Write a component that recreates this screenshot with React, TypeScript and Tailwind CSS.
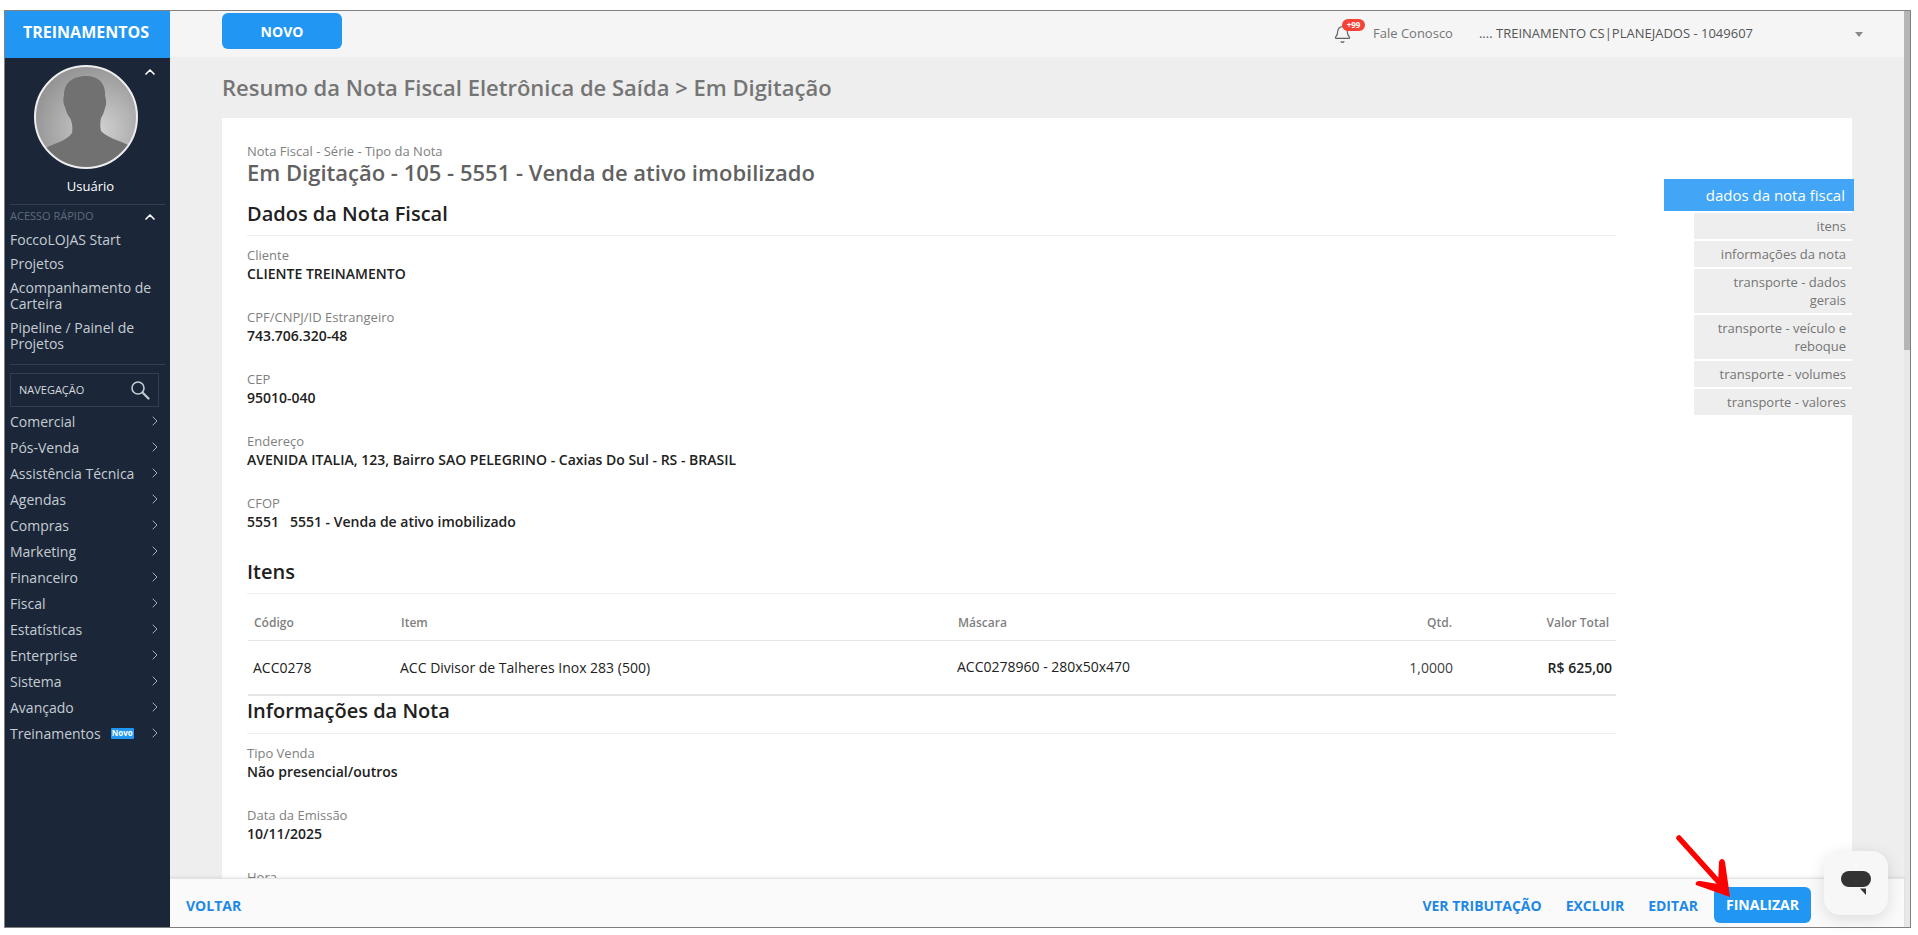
import { Bell, ChevronRight, ChevronUp } from 'lucide-react'

const quickLinks = ['FoccoLOJAS Start', 'Projetos', 'Acompanhamento de Carteira', 'Pipeline / Painel de Projetos']

const menu = [
  'Comercial',
  'Pós-Venda',
  'Assistência Técnica',
  'Agendas',
  'Compras',
  'Marketing',
  'Financeiro',
  'Fiscal',
  'Estatísticas',
  'Enterprise',
  'Sistema',
  'Avançado',
]

const sideNav = [
  { label: 'itens', h: 'h-[26px]' },
  { label: 'informações da nota', h: 'h-[26px]' },
  { label: 'transporte - dados gerais', h: 'h-[44px]' },
  { label: 'transporte - veículo e reboque', h: 'h-[44px]' },
  { label: 'transporte - volumes', h: 'h-[26px]' },
  { label: 'transporte - valores', h: 'h-[26px]' },
]

function Field({ label, value }: { label: string; value: string }) {
  return (
    <div className="mb-[25px]">
      <div className="text-[13px] leading-[18px] text-[#808080]">{label}</div>
      <div className="mt-px whitespace-pre text-[14px] font-semibold leading-[18px] text-[#212121]">{value}</div>
    </div>
  )
}

function SectionTitle({ children }: { children: string }) {
  return (
    <h2 className="border-b border-[#eeeeee] pb-[9px] text-[20px] font-semibold leading-[24px] text-[#212121]">
      {children}
    </h2>
  )
}

function Avatar() {
  return (
    <svg viewBox="0 0 104 104" className="h-[104px] w-[104px]">
      <defs>
        <radialGradient id="avatarBg" cx="0.62" cy="0.62" r="0.7">
          <stop offset="0" stopColor="#d2d2d2" />
          <stop offset="1" stopColor="#8f8f8f" />
        </radialGradient>
        <clipPath id="avatarClip">
          <circle cx="52" cy="52" r="51" />
        </clipPath>
      </defs>
      <circle cx="52" cy="52" r="51" fill="url(#avatarBg)" />
      <path
        clipPath="url(#avatarClip)"
        d="M30 30C30 17 40 11 52 11C65 11 72 19 71 31C72 34 73 38 71 43C70 47 69 50 67 53C66 58 66 62 67 66C72 72 84 75 94 80L104 104L0 104L12 83C20 78 33 76 38 68C39 62 38 57 36 53C33 49 32 46 31 42C29 38 29 34 30 30Z"
        fill="#717171"
      />
      <circle cx="52" cy="52" r="51" fill="none" stroke="#eeeeee" strokeWidth="2" />
    </svg>
  )
}

function Sidebar() {
  return (
    <aside className="flex w-[165px] shrink-0 flex-col bg-[#1b2739]">
      <div className="flex h-[47px] shrink-0 items-center justify-center bg-[#2196f3] pb-[6px] pr-[3px] text-[16px] font-bold text-white">
        TREINAMENTOS
      </div>
      <div className="relative flex flex-col items-center pt-[7px]">
        <div className="mr-[4px]">
          <Avatar />
        </div>
        <ChevronUp className="absolute left-[137px] top-[6px] text-white" size={16} strokeWidth={2.5} />
        <div className="ml-[6px] mt-[8px] text-[13px] leading-[18px] text-white">Usuário</div>
      </div>
      <div className="mx-[5px] mt-[9px] border-t border-[#323e4f]" />
      <div className="relative flex h-[24px] items-center px-[5px] pb-px text-[11px] text-[#5f6b7a]">
        ACESSO RÁPIDO
        <ChevronUp className="absolute left-[137px] top-[4px] text-white" size={16} strokeWidth={2.5} />
      </div>
      <div className="flex flex-col gap-[8px] px-[5px] pt-[3px]">
        {quickLinks.map((l) => (
          <a key={l} className="w-[150px] text-[14px] leading-[16px] text-[#c6ccd3]">
            {l}
          </a>
        ))}
      </div>
      <div className="mx-[5px] mt-[12px] border-t border-[#323e4f]" />
      <div className="mx-[5px] mt-[8px] flex h-[34px] w-[149px] items-center justify-between border border-[#323e4f] pl-[8px] pr-[8px]">
        <span className="text-[11px] font-normal text-[#d5d9de]">NAVEGAÇÃO</span>
        <svg viewBox="0 0 20 20" className="h-5 w-5" fill="none" stroke="#c6ccd3">
          <circle cx="8" cy="8" r="6" strokeWidth="1.6" />
          <path d="M12.500 12.500L18.500 18.500" strokeWidth="2.200" strokeLinecap="round" />
        </svg>
      </div>
      <nav className="mt-[1px] flex flex-col">
        {menu.map((m) => (
          <div key={m} className="flex h-[26px] items-center justify-between pl-[5px] pr-[7px]">
            <span className="text-[14px] text-[#c6ccd3]">{m}</span>
            <ChevronRight className="text-[#a7aeb7]" size={16} strokeWidth={1.5} />
          </div>
        ))}
        <div className="flex h-[26px] items-center justify-between pl-[5px] pr-[7px]">
          <span className="flex items-center">
            <span className="text-[14px] text-[#c6ccd3]">Treinamentos</span>
            <span className="ml-[10px] flex h-[11px] w-[23px] items-center justify-center rounded-[1px] bg-[#2196f3] text-[8px] font-bold text-white">
              Novo
            </span>
          </span>
          <ChevronRight className="text-[#a7aeb7]" size={16} strokeWidth={1.5} />
        </div>
      </nav>
    </aside>
  )
}

function TopBar() {
  return (
    <header className="flex h-[46px] shrink-0 items-center bg-[#f5f5f5] pl-[52px]">
      <button className="mt-[2px] flex h-9 w-[120px] items-center justify-center self-start rounded-[6px] bg-[#2196f3] text-[14px] font-bold text-white">
        NOVO
      </button>
      <div className="relative ml-[991px]">
        <Bell className="text-[#616161]" size={19} strokeWidth={1.5} />
        <span className="absolute left-[9px] top-[-6px] flex h-[12px] w-[23px] items-center justify-center rounded-full bg-[#f44336] text-[8px] font-bold text-white">
          +99
        </span>
      </div>
      <span className="ml-[21px] text-[13px] text-[#757575]">Fale Conosco</span>
      <span className="ml-[26px] text-[13px] text-[#555555]">.... TREINAMENTO CS|PLANEJADOS - 1049607</span>
      <svg viewBox="0 0 8 5" className="ml-[102px] h-[5px] w-[8px]">
        <path d="M0 0H8L4 5Z" fill="#8a8a8a" />
      </svg>
    </header>
  )
}

function ItemsTable() {
  return (
    <div className="ml-px">
      <div className="grid grid-cols-[147px_557px_350px_155px_158px] border-b border-[#e5e5e5] pb-[9px] pt-[21px] text-[12px] font-semibold leading-[16px] text-[#808080]">
        <div className="pl-[6px]">Código</div>
        <div className="pl-[6px]">Item</div>
        <div className="pl-[6px]">Máscara</div>
        <div className="pr-[5px] text-right">Qtd.</div>
        <div className="pr-[6px] text-right">Valor Total</div>
      </div>
      <div className="grid h-[55px] grid-cols-[147px_557px_350px_155px_158px] items-center border-b-2 border-[#e5e5e5] text-[14px] text-[#212121]">
        <div className="pl-[5px]">ACC0278</div>
        <div className="pl-[5px]">ACC Divisor de Talheres Inox 283 (500)</div>
        <div className="mb-[2px] pl-[5px]">ACC0278960 - 280x50x470</div>
        <div className="pr-[4px] text-right text-[#424242]">1,0000</div>
        <div className="pr-[3px] text-right font-semibold">R$ 625,00</div>
      </div>
    </div>
  )
}

function Card() {
  return (
    <section className="flex bg-white pl-[25px] pt-[26px]">
      <div className="w-[1369px] shrink-0">
        <div className="text-[13px] leading-[15px] text-[#808080]">Nota Fiscal - Série - Tipo da Nota</div>
        <h1 className="text-[22px] font-semibold leading-[26px] text-[#616161]">
          Em Digitação - 105 - 5551 - Venda de ativo imobilizado
        </h1>
        <div className="mt-[17px]">
          <SectionTitle>Dados da Nota Fiscal</SectionTitle>
        </div>
        <div className="mt-[10px]">
          <Field label="Cliente" value="CLIENTE TREINAMENTO" />
          <Field label="CPF/CNPJ/ID Estrangeiro" value="743.706.320-48" />
          <Field label="CEP" value="95010-040" />
          <Field label="Endereço" value="AVENIDA ITALIA, 123, Bairro SAO PELEGRINO - Caxias Do Sul - RS - BRASIL" />
          <Field label="CFOP" value="5551   5551 - Venda de ativo imobilizado" />
        </div>
        <div className="mt-[29px]">
          <SectionTitle>Itens</SectionTitle>
        </div>
        <ItemsTable />
        <div className="mt-[3px] [&_h2]:pb-[10px]">
          <SectionTitle>Informações da Nota</SectionTitle>
        </div>
        <div className="mt-[10px]">
          <Field label="Tipo Venda" value="Não presencial/outros" />
          <Field label="Data da Emissão" value="10/11/2025" />
          <Field label="Hora" value="" />
        </div>
      </div>
      <div className="ml-[48px] mt-[35px] flex w-[190px] shrink-0 flex-col items-end">
        <div className="mb-[2px] flex h-[32px] w-[190px] items-center justify-end bg-[#42a5f5] pr-[9px] pt-px text-[15px] text-white">
          dados da nota fiscal
        </div>
        <div className="flex w-full flex-col items-end gap-[2px] pr-[2px]">
          {sideNav.map((n) => (
            <div
              key={n.label}
              className={`flex w-[158px] items-center justify-end bg-[#eeeeee] pl-[8px] pr-[6px] text-right text-[13px] leading-[18px] text-[#757575] ${n.h}`}
            >
              {n.label}
            </div>
          ))}
        </div>
      </div>
    </section>
  )
}

function Footer() {
  return (
    <footer className="z-10 flex h-[49px] shrink-0 items-center justify-between border-t border-[#e3e3e3] bg-[#fafafa] pl-[16px] pr-[93px] pt-[3px] shadow-[0_-1px_3px_rgba(0,0,0,0.08)]">
      <a className="mt-[2px] text-[14px] font-bold text-[#1e88e5]">VOLTAR</a>
      <div className="flex items-center">
        <a className="mt-[2px] text-[14px] font-bold text-[#1e88e5]">VER TRIBUTAÇÃO</a>
        <a className="ml-[24px] mt-[2px] text-[14px] font-bold text-[#1e88e5]">EXCLUIR</a>
        <a className="ml-[24px] mt-[2px] text-[14px] font-bold text-[#1e88e5]">EDITAR</a>
        <button className="ml-[16px] flex h-9 w-[97px] items-center justify-center rounded-[6px] bg-[#2196f3] text-[14px] font-bold text-white">
          FINALIZAR
        </button>
      </div>
    </footer>
  )
}

export default function App() {
  return (
    <div className="relative h-[935px] w-[1918px] overflow-hidden bg-white pb-[7px] pl-[4px] pr-[7px] pt-[10px] font-['Open_Sans',sans-serif]">
      <div className="flex h-full border border-[#808080]">
        <Sidebar />
        <main className="flex min-w-0 flex-1 flex-col">
          <TopBar />
          <div className="min-h-0 flex-1 overflow-hidden bg-[#eeeeee] px-[52px]">
            <div className="h-[61px] pt-[16px] text-[22px] font-semibold leading-[28px] text-[#757575]">
              Resumo da Nota Fiscal Eletrônica de Saída &gt; Em Digitação
            </div>
            <Card />
          </div>
          <Footer />
        </main>
        <div className="w-[6px] shrink-0 bg-[#e8e8e8]">
          <div className="h-[339px] bg-[#b5b5b5]" />
        </div>
      </div>

      {/* chat launcher */}
      <div className="absolute bottom-[20px] right-[30px] z-20 flex h-16 w-16 items-center justify-center rounded-[16px] bg-[#f7f7f7] shadow-[0_4px_16px_rgba(0,0,0,0.12)]">
        <svg viewBox="0 0 30 24" className="h-6 w-[30px]">
          <rect x="0" y="0" width="30" height="16" rx="8" fill="#333333" />
          <path d="M19 17.500H25V24Z" fill="#333333" />
        </svg>
      </div>

      {/* red annotation arrow */}
      <svg viewBox="0 0 70 70" className="absolute left-[1670px] top-[832px] z-20 h-[70px] w-[70px]">
        <path d="M9 6L55 57" stroke="#ff0000" strokeWidth="5.500" strokeLinecap="round" fill="none" />
        <path d="M60 65L26 53C25 50 27 49 30 49L48 52L49 30C50 26 54 26 55 30Z" fill="#ff0000" />
      </svg>
    </div>
  )
}
